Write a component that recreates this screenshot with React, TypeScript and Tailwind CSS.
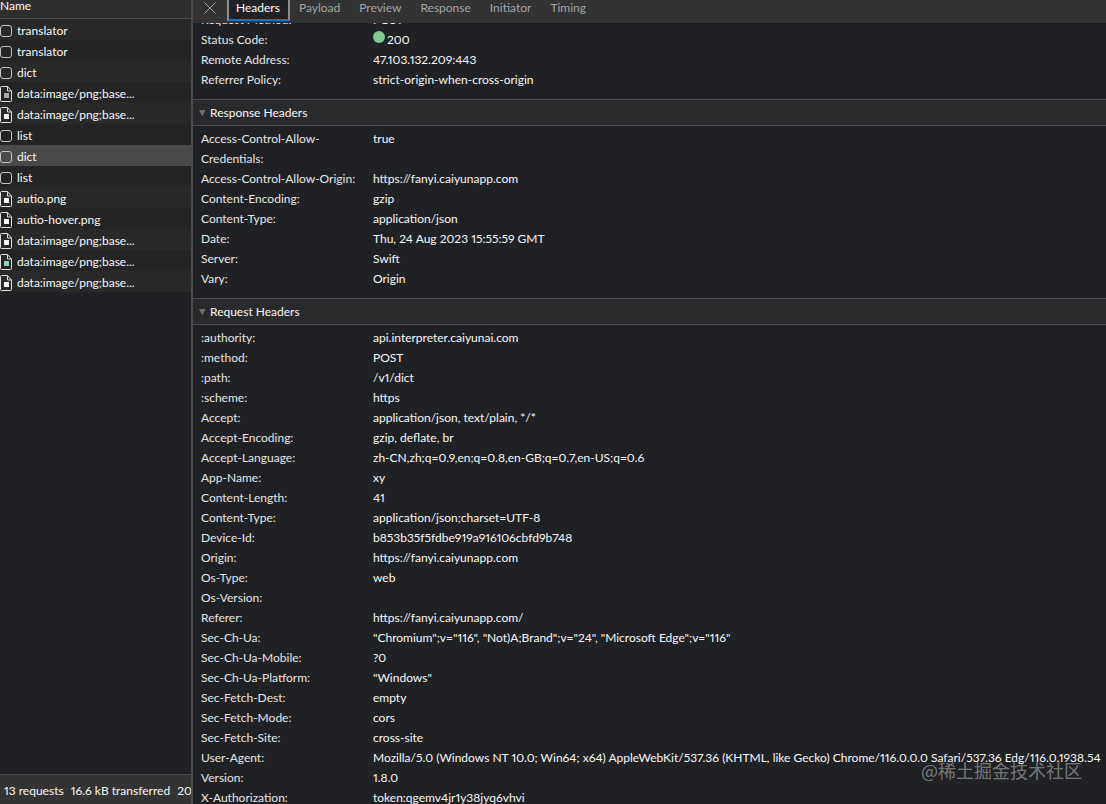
import { useState } from "react";

type Kind = "fetch" | "image";

interface RequestItem {
  id: number;
  name: string;
  kind: Kind;
  thumb?: string;
}

const REQUESTS: RequestItem[] = [
  { id: 1,  name: "translator", kind: "fetch" },
  { id: 2,  name: "translator", kind: "fetch" },
  { id: 3,  name: "dict", kind: "fetch" },
  { id: 4,  name: "data:image/png;base...", kind: "image", thumb: "#a8a8a8" },
  { id: 5,  name: "data:image/png;base...", kind: "image" },
  { id: 6,  name: "list", kind: "fetch" },
  { id: 7,  name: "dict", kind: "fetch" },
  { id: 8,  name: "list", kind: "fetch" },
  { id: 9,  name: "autio.png", kind: "image" },
  { id: 10, name: "autio-hover.png", kind: "image" },
  { id: 11, name: "data:image/png;base...", kind: "image" },
  { id: 12, name: "data:image/png;base...", kind: "image", thumb: "#8fd3b6" },
  { id: 13, name: "data:image/png;base...", kind: "image" },
];

const TABS = ["Headers", "Payload", "Preview", "Response", "Initiator", "Timing"];

const GENERAL: [string, string][] = [
  ["Request Method:", "POST"],
  ["Status Code:", "200"],
  ["Remote Address:", "47.103.132.209:443"],
  ["Referrer Policy:", "strict-origin-when-cross-origin"],
];

const RESPONSE_HEADERS: [string, string][] = [
  ["Access-Control-Allow-Credentials:", "true"],
  ["Access-Control-Allow-Origin:", "https://fanyi.caiyunapp.com"],
  ["Content-Encoding:", "gzip"],
  ["Content-Type:", "application/json"],
  ["Date:", "Thu, 24 Aug 2023 15:55:59 GMT"],
  ["Server:", "Swift"],
  ["Vary:", "Origin"],
];

const REQUEST_HEADERS: [string, string][] = [
  [":authority:", "api.interpreter.caiyunai.com"],
  [":method:", "POST"],
  [":path:", "/v1/dict"],
  [":scheme:", "https"],
  ["Accept:", "application/json, text/plain, */*"],
  ["Accept-Encoding:", "gzip, deflate, br"],
  ["Accept-Language:", "zh-CN,zh;q=0.9,en;q=0.8,en-GB;q=0.7,en-US;q=0.6"],
  ["App-Name:", "xy"],
  ["Content-Length:", "41"],
  ["Content-Type:", "application/json;charset=UTF-8"],
  ["Device-Id:", "b853b35f5fdbe919a916106cbfd9b748"],
  ["Origin:", "https://fanyi.caiyunapp.com"],
  ["Os-Type:", "web"],
  ["Os-Version:", ""],
  ["Referer:", "https://fanyi.caiyunapp.com/"],
  ["Sec-Ch-Ua:", '"Chromium";v="116", "Not)A;Brand";v="24", "Microsoft Edge";v="116"'],
  ["Sec-Ch-Ua-Mobile:", "?0"],
  ["Sec-Ch-Ua-Platform:", '"Windows"'],
  ["Sec-Fetch-Dest:", "empty"],
  ["Sec-Fetch-Mode:", "cors"],
  ["Sec-Fetch-Site:", "cross-site"],
  [
    "User-Agent:",
    "Mozilla/5.0 (Windows NT 10.0; Win64; x64) AppleWebKit/537.36 (KHTML, like Gecko) Chrome/116.0.0.0 Safari/537.36 Edg/116.0.1938.54",
  ],
  ["Version:", "1.8.0"],
  ["X-Authorization:", "token:qgemv4jr1y38jyq6vhvi"],
];

function RequestIcon({ kind, thumb = "#f4f4f4" }: { kind: Kind; thumb?: string }) {
  if (kind === "fetch") {
    return (
      <svg width="12" height="16" viewBox="0 0 12 16" fill="none" className="shrink-0" aria-hidden="true">
        <rect x="0.5" y="2.5" width="11" height="11" rx="2.5" stroke="#c4c4c4" />
      </svg>
    );
  }
  return (
    <svg width="12" height="16" viewBox="0 0 12 16" fill="none" className="shrink-0" aria-hidden="true">
      <path d="M0.5 1.5V14.5Q0.5 15.5 1.5 15.5H10.5Q11.5 15.5 11.5 14.5V5L7.5 0.5H1.5Q0.5 0.5 0.5 1.5Z" stroke="#dedede" />
      <path d="M7.5 0.5V5H11.5" stroke="#dedede" />
      <rect x="4" y="7" width="5" height="5" fill={thumb} />
    </svg>
  );
}

function HeaderRows({ rows }: { rows: [string, string][] }) {
  return (
    <dl className="pl-2 pt-[3px] pb-[9px]">
      {rows.map(([label, value]) => (
        <div key={label} className="flex leading-5">
          <dt className="w-[172px] shrink-0 pr-3 text-[#e6e6e8]">{label}</dt>
          <dd className="flex min-w-0 whitespace-nowrap text-[#f8f8f8]">
            {label === "Status Code:" && (
              <span className="mt-px mr-0.5 size-3 shrink-0 rounded-full bg-[#81c995]" />
            )}
            {value}
          </dd>
        </div>
      ))}
    </dl>
  );
}

function Section({ title, rows }: { title: string; rows: [string, string][] }) {
  const [open, setOpen] = useState(true);
  return (
    <section>
      <h2>
        <button
          type="button"
          aria-expanded={open}
          onClick={() => setOpen(!open)}
          className="flex h-[27px] w-full items-center gap-1 border-y border-[#4a4b4d] bg-[#292a2c] pl-[5px] text-left text-[#f8f8f8]"
        >
          <svg width="8" height="9" viewBox="0 0 8 9" className={open ? "" : "-rotate-90"} aria-hidden="true">
            <path d="M1 2H7.5L4.25 8.5Z" fill="#6c6e70" />
          </svg>
          {title}
        </button>
      </h2>
      {open && <HeaderRows rows={rows} />}
    </section>
  );
}

export default function App() {
  const [selected, setSelected] = useState(7);
  const [tab, setTab] = useState("Headers");

  return (
    <div className="relative flex h-screen overflow-hidden bg-[#202124] font-['Lato','Noto_Sans_CJK_SC',sans-serif] text-xs text-[#f8f8f8] proportional-nums">
      <aside className="flex w-[193px] shrink-0 flex-col border-r-2 border-[#48494b]">
        <div className="flex h-[19px] shrink-0 items-start border-b border-[#4a4b4d] bg-[#2f2f2f] leading-3">Name</div>
        <ul className="min-h-0 flex-1 overflow-hidden">
          {REQUESTS.map((item, i) => (
            <li key={item.id}>
              <button
                type="button"
                onClick={() => setSelected(item.id)}
                className={`flex h-[21px] w-full items-center gap-[5px] pt-[3px] text-left leading-4 ${
                  item.id === selected ? "bg-[#4a4a4a]" : i % 2 ? "bg-[#242424]" : "bg-[#292929]"
                }`}
              >
                <RequestIcon kind={item.kind} thumb={item.thumb} />
                {item.name}
              </button>
            </li>
          ))}
        </ul>
        <footer className="flex h-[30px] shrink-0 items-center gap-[7px] overflow-hidden border-t border-[#4a4b4d] bg-[#333333] pt-0.5 pl-1 whitespace-nowrap">
          <span>13 requests</span>
          <span>16.6 kB transferred</span>
          <span>20</span>
        </footer>
      </aside>

      <main className="flex min-w-0 flex-1 flex-col">
        <div className="z-10 flex h-[23px] shrink-0 bg-[#333333]">
          <button type="button" aria-label="Close" className="flex w-[34px] justify-center pt-0.5">
            <svg width="12" height="12" viewBox="0 0 12 12" stroke="#a0a0a0" aria-hidden="true">
              <path d="M0.5 0.5L11.5 11.5M11.5 0.5L0.5 11.5" />
            </svg>
          </button>
          <div role="tablist" className="flex">
            {TABS.map((name) => (
              <button
                key={name}
                type="button"
                role="tab"
                aria-selected={tab === name}
                onClick={() => setTab(name)}
                className={`flex h-[21px] items-start border-x-2 border-b-2 pr-2 pl-[7px] leading-4 ${
                  tab === name
                    ? "border-x-[#8f8f8f] border-b-[#1a73c8] bg-[#202124] text-white"
                    : "border-transparent text-[#a3a5a8]"
                }`}
              >
                {name}
              </button>
            ))}
          </div>
        </div>
        <div className="min-h-0 flex-1 overflow-hidden">
          <div className="-mt-4">
            <HeaderRows rows={GENERAL} />
            <Section title="Response Headers" rows={RESPONSE_HEADERS} />
            <Section title="Request Headers" rows={REQUEST_HEADERS} />
          </div>
        </div>
      </main>

      <div className="pointer-events-none absolute right-6 bottom-5 font-['Noto_Sans_CJK_SC',sans-serif] text-lg text-white/40">
        @稀土掘金技术社区
      </div>
    </div>
  );
}
